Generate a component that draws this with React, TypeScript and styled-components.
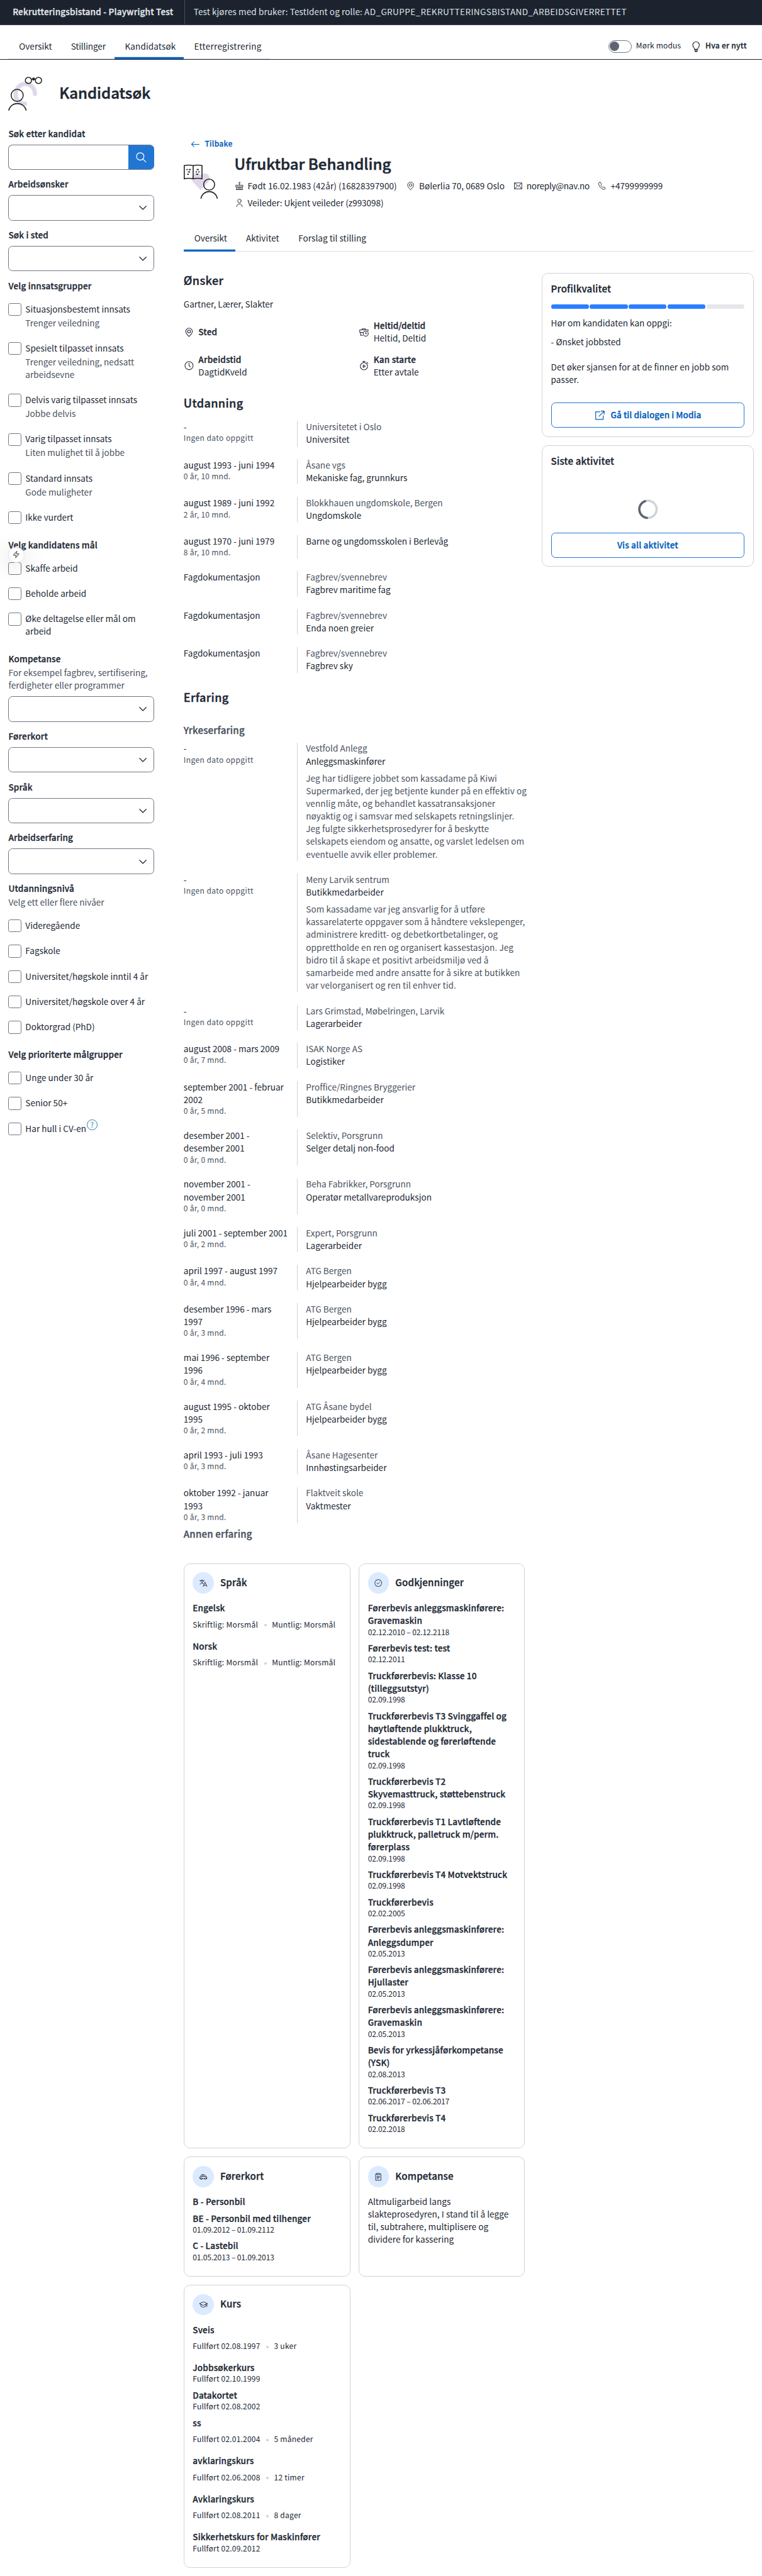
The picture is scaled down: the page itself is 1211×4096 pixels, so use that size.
import React from 'react';
import styled, { createGlobalStyle, css } from 'styled-components';

const ink = '#202733';
const subtle = '#49515e';
const line = '#cfd3d8';
const fieldBorder = '#6f7785';
const accent = '#2176d4';
const accentText = '#005cb8';

const GlobalStyle = createGlobalStyle`
  *, *::before, *::after { box-sizing: border-box; }
  html, body { margin: 0; background: #fff; overflow-x: hidden; }
  body { font-family: "Noto Sans CJK SC", "Noto Sans", sans-serif; color: ${ink}; }
  h1, h2, h3, p, ul { margin: 0; padding: 0; font-weight: 400; }
`;

type Size = 'xs' | 's' | 'm' | 'l' | 'xl';
/* font size, line height, tracking of regular text, tracking of headings */
const sizes: Record<Size, [number, number, number, number]> = {
  xs: [14.3, 20, 0.3, 0.35],
  s: [16.1, 24, 0.04, 0.2],
  m: [17.9, 28, 0, 0.22],
  l: [21.5, 32, 0, 0.45],
  xl: [28.6, 40, 0, 0],
};

const type = css<{ $size?: Size; $bold?: boolean; $color?: string; $track?: number }>`
  font-size: ${p => sizes[p.$size ?? 's'][0]}px;
  line-height: ${p => sizes[p.$size ?? 's'][1]}px;
  font-weight: ${p => (p.$bold ? 500 : 400)};
  ${p => p.$bold && '-webkit-text-stroke: 0.022em currentColor;'}
  color: ${p => p.$color ?? ink};
  letter-spacing: ${p => p.$track ?? sizes[p.$size ?? 's'][p.$bold ? 3 : 2]}px;
  white-space: pre;
`;

const Text = styled.p<{ $size?: Size; $bold?: boolean; $color?: string; $track?: number }>`
  ${type}
  margin-top: -0.085em;
  margin-bottom: 0.085em;
`;
const Caps = styled.span`letter-spacing: 0.47px;`;

const Page = styled.div`
  zoom: 0.841;
  width: 1439.9px;
  height: 4869px;
  position: relative;
  display: flex;
  flex-direction: column;
`;

const TopBar = styled.header`
  height: 48px;
  flex: none;
  display: flex;
  align-items: center;
  background: #1c232f;
  border-bottom: 1px solid #3a4250;
`;
const TopTitle = styled.div`
  width: 350px;
  height: 47px;
  padding-left: 24px;
  display: flex;
  align-items: center;
  border-right: 1px solid #454d5a;
`;
const TopInfo = styled.div`padding-left: 16px;`;

const NavBar = styled.nav`
  height: 65px;
  flex: none;
  display: flex;
  align-items: stretch;
  justify-content: space-between;
  padding: 0 28px 0 16px;
  border-bottom: 1px solid #1c232f;
`;
const TabList = styled.div<{ $full?: boolean }>`
  display: flex;
  align-items: stretch;
  box-shadow: inset 0 -1px 0 ${line};
  ${p => p.$full && 'height: 48px;'}
`;
const Tab = styled.div<{ $w: number; $active?: boolean }>`
  width: ${p => p.$w}px;
  padding: 0 0 1px 20px;
  display: flex;
  align-items: center;
  box-shadow: ${p => (p.$active ? 'inset 0 -4px 0 #0063c1' : 'none')};
`;
const NavTab = styled(Tab)`padding-top: 16px; padding-bottom: 0;`;
const NavTools = styled.div`
  display: flex;
  align-items: center;
  padding-top: 16px;
`;
const Switch = styled.div`
  width: 44px;
  height: 24px;
  margin-right: 8px;
  padding: 1px;
  border: 2px solid ${fieldBorder};
  border-radius: 12px;
  &::before {
    content: '';
    display: block;
    width: 18px;
    height: 18px;
    border-radius: 50%;
    background: #5d6573;
  }
`;
const NewsButton = styled.div`
  display: flex;
  align-items: center;
  width: 107px;
  margin-left: 18px;
  gap: 6px;
`;

const PageHead = styled.div`
  height: 128px;
  flex: none;
  display: flex;
  align-items: center;
  gap: 32px;
  padding: 0 16px;
`;
const Columns = styled.div`
  display: flex;
  gap: 56px;
  padding: 0 15.9px 0 16px;
`;

const Sidebar = styled.aside`
  width: 275px;
  flex: none;
  display: flex;
  flex-direction: column;
  gap: 16px;
`;
const Field = styled.div`display: flex; flex-direction: column;`;
const Control = styled.div`
  height: 48px;
  margin-top: 8px;
  border: 1px solid ${fieldBorder};
  border-radius: 8px;
  display: flex;
  align-items: center;
  justify-content: flex-end;
  padding-right: 8px;
  overflow: hidden;
`;
const SearchControl = styled(Control)`padding-right: 0; border-right: 0;`;
const SearchButton = styled.div`
  width: 48px;
  height: 48px;
  flex: none;
  background: ${accent};
  display: flex;
  align-items: center;
  justify-content: center;
`;
const Hint = styled(Text)`padding-top: 2px;`;
const Checks = styled.div`padding-top: 8px;`;
const Check = styled.div`
  display: flex;
  gap: 8px;
  padding: 12px 0;
`;
const Box = styled.span`
  width: 24px;
  height: 24px;
  flex: none;
  border: 2px solid ${fieldBorder};
  border-radius: 4px;
  background: #fff;
`;
const HelpMark = styled.span`
  margin: -6px 0 0 -7px;
  width: 20px;
  height: 20px;
  border: 1px solid #2a7aa8;
  border-radius: 50%;
  color: #2a7aa8;
  font-size: 13px;
  line-height: 17px;
  text-align: center;
`;
const BoltButton = styled.div`
  position: absolute;
  left: 16px;
  top: 1034px;
  width: 30px;
  height: 30px;
  border-radius: 50%;
  background: #fff;
  border: 1px solid #e4e4e6;
  box-shadow: 0 4px 40px rgba(0, 0, 0, 0.18);
  display: flex;
  align-items: center;
  justify-content: center;
`;

const Main = styled.main`
  flex: 1;
  display: flex;
  flex-direction: column;
  padding-top: 20px;
`;
const Back = styled.div`
  display: flex;
  align-items: center;
  gap: 8px;
  height: 24px;
  padding-left: 12px;
`;
const Profile = styled.div`
  display: flex;
  align-items: flex-start;
  gap: 32px;
  padding-top: 7px;
  height: 143px;
`;
const ProfileArt = styled.div`padding-top: 20px;`;
const Facts = styled.div`
  display: flex;
  height: 32px;
  align-items: center;
`;
const Fact = styled.div<{ $w?: number }>`
  display: flex;
  align-items: center;
  gap: 7px;
  width: ${p => (p.$w ? `${p.$w}px` : 'auto')};
`;
const Body = styled.div`
  display: flex;
  gap: 32px;
  padding-top: 40px;
`;
const Details = styled.div`width: 645px; flex: none;`;
const Aside = styled.div`
  flex: 1;
  display: flex;
  flex-direction: column;
  gap: 16px;
`;

const WishGrid = styled.div`
  display: grid;
  grid-template-columns: 331px 1fr;
  row-gap: 16px;
  margin: 16px 0 32px;
`;
const Wish = styled.div`
  display: flex;
  align-items: center;
  gap: 8px;
  height: 48px;
`;
const Timeline = styled.div`display: flex; flex-direction: column; gap: 24px;`;
const Entry = styled.div`
  display: grid;
  grid-template-columns: 214px 1fr;
`;
const EntryBody = styled.div`
  border-left: 1px solid ${line};
  padding-left: 16px;
`;
const Story = styled(Text)`padding-top: 8px;`;
const Section = styled.div<{ $top?: number; $bottom?: number }>`
  display: flow-root;
  padding-top: ${p => p.$top ?? 0}px;
  padding-bottom: ${p => p.$bottom ?? 0}px;
`;

const Cards = styled.div`
  display: grid;
  grid-template-columns: 315px 314px;
  gap: 16px;
  padding-top: 40px;
`;
const Card = styled.section`
  border: 1px solid ${line};
  border-radius: 12px;
  padding: 16px 16px 24px;
`;
const CardHead = styled.div`
  display: flex;
  align-items: center;
  gap: 12px;
  margin-bottom: 16px;
`;
const Badge = styled.span`
  width: 40px;
  height: 40px;
  border-radius: 50%;
  background: #dbeafe;
  display: flex;
  align-items: center;
  justify-content: center;
`;
const Items = styled.div`display: flex; flex-direction: column; gap: 8px;`;
const DotRow = styled.div`
  display: flex;
  align-items: center;
  padding: 10px 0;
`;
const Dot = styled.span`
  width: 5px;
  height: 5px;
  margin: 0 10px 0 11px;
  border-radius: 50%;
  background: ${line};
`;

const Panel = styled.section<{ $h: number }>`
  height: ${p => p.$h}px;
  border: 1px solid ${line};
  border-radius: 12px;
  padding: 16px;
  display: flex;
  flex-direction: column;
`;
const Meter = styled.div`
  display: grid;
  grid-template-columns: repeat(5, 1fr);
  gap: 2px;
  margin: 15px 0 15px;
`;
const Segment = styled.span<{ $on: boolean }>`
  height: 8px;
  border-radius: 4px;
  background: ${p => (p.$on ? '#2b7fff' : '#e5e7eb')};
`;
const PanelText = styled(Text)<{ $gap: number }>`padding-bottom: ${p => p.$gap}px;`;
const Outline = styled.div`
  height: 48px;
  margin-top: auto;
  border: 2px solid ${accent};
  border-radius: 8px;
  display: flex;
  align-items: center;
  justify-content: center;
  gap: 9px;
`;
const SpinnerWrap = styled.div`
  flex: 1;
  display: flex;
  justify-content: center;
  padding-top: 56px;
`;

const iconPaths: Record<string, React.ReactNode> = {
  chevron: <path d="M5.8 9.2 12 15.400l6.200-6.200" />,
  search: <><circle cx="10.500" cy="10.300" r="7" /><path d="m15.500 15.300 5.700 5.700" /></>,
  back: <><path d="M3.500 12h17" /><path d="M9 6.500 3.500 12 9 17.500" /></>,
  bulb: <><path d="M8.800 17.200c0-3-3.600-4.400-3.600-8.600A6.700 6.700 0 0 1 12 2a6.700 6.700 0 0 1 6.800 6.600c0 4.200-3.600 5.600-3.600 8.600z" /><path d="M9.500 17.500h5v3a2.500 2 0 0 1-5 0z" fill="currentColor" fillOpacity="0.5" /></>,
  cake: <><circle cx="12" cy="4" r="1.600" /><path d="M12 6v4" /><path d="M3.500 10.200h17v4.300h-17zM5 14.500V21h14v-6.500M8.500 14.500v2.800q1.700 2 3.500 0v-2.800M12 17.300q1.700 2 3.500 0v-2.800M3.500 21h17" /></>,
  pin: <><path d="M12 21.500c-4.500-4.200-7.500-7.500-7.500-11.500a7.500 7.500 0 0 1 15 0c0 4-3 7.300-7.500 11.500z" /><circle cx="12" cy="10" r="3.300" /></>,
  mail: <><path d="M3 4.500h18v15H3z" /><path d="m3.500 5 8.500 8 8.500-8M3.500 19l6.500-7.500M20.500 19 14 11.500" /></>,
  phone: <path d="M6.800 2.800 3.700 5c-.6 6.500 6.800 15.200 13.600 16.200l3.400-2.600c.4-.4.300-.9 0-1.300l-3.200-2.600c-.5-.3-1-.2-1.300.1l-1.500 1.500c-2.200-1-4.600-4-5.300-6.300l1.300-1.300c.3-.4.400-.8.100-1.300L8.200 3.100c-.3-.5-.9-.6-1.400-.3z" />,
  person: <><ellipse cx="12" cy="7.300" rx="4.300" ry="4.800" /><path d="M5 21.500c.5-4.500 3.300-6.700 7-6.700s6.500 2.200 7 6.700" /></>,
  hours: <><path d="M8 6.500V4h7v2.500M9 19H4.500v-7M2.500 12V6.500h19v2.500M2.500 12h7" /><circle cx="16" cy="15" r="5.800" /><path d="M16 12v3.300h2.300" /></>,
  clock: <><circle cx="12" cy="12" r="9.200" /><path d="M12 6.500V12l2.800 2.800" /></>,
  timer: <><circle cx="12" cy="13.300" r="8.200" /><path d="M9.500 2.300h5M12 2.300V5M18.500 4.500l2.500 2.500M10.300 10.500v5.600l4.700-2.800z" /></>,
  external: <><path d="M12 5H3.500v15.500H19V13" /><path d="M14.500 3.500h6.500V10M21 3.500 10.500 14" /></>,
  language: <><path d="M2.500 5.500h12M8.500 3v2.500M5 5.500c1 4 4 7 7.500 8.500M12.500 5.500c-1 4.500-4.500 8-9.500 9.500" /><path d="m11.500 21.500 5-12 5 12M13 18h7" /></>,
  seal: <><path d="M12 2.200l2.700 1.700 3.200.1.900 3 2.500 2-1 3 1 3-2.500 2-.9 3-3.200.1L12 21.800l-2.700-1.700-3.200-.1-.9-3-2.500-2 1-3-1-3 2.500-2 .9-3 3.200-.1z" /><path d="m8.500 12 2.500 2.700 4.500-5" /></>,
  car: <><path d="M4 17H2.700v-4.500L5 11l2.500-4.500h7.300L18.500 11l2.800 1.500V17H20M9 17h6M5 11h13.500M11 6.500V11" /><circle cx="6.500" cy="17" r="2.300" /><circle cx="17.500" cy="17" r="2.300" /></>,
  clipboard: <><path d="M8 4.500H5v17h14v-17h-3M8.500 3h7v3.500h-7zM8.500 11h7M8.500 14h7M8.500 17h4" /></>,
  grad: <><path d="M12 5.500 1.500 10 12 14.500 22.500 10zM5.500 12v5c3.500 3 9.500 3 13 0v-5M21.500 10.500V18" /></>,
  bolt: <path d="M14 2.500 4 14h7.500L10 21.500 20 10h-7.500z" />,
};

const Glyph = styled.svg`display: block; flex: none; overflow: visible;`;
function Icon({ name, size = 18, color = ink, stroke = 1.5 }: { name: string; size?: number; color?: string; stroke?: number }) {
  return (
    <Glyph width={size} height={size} viewBox="0 0 24 24" fill="none" stroke="currentColor" color={color}
      strokeWidth={stroke} strokeLinejoin="round" strokeLinecap="round">
      {iconPaths[name]}
    </Glyph>
  );
}

function SearchArt() {
  return (
    <Glyph width={64} height={64} viewBox="0 0 64 64" fill="none" stroke="#232323" strokeWidth="1.8">
      <path d="M50.600 32.500C50.600 22 43 13.500 32.500 13.500S14 23 14 34c0 10 8 17 18 17" stroke="#e0d8e9" strokeWidth="8" strokeLinecap="round" />
      <circle cx="38.300" cy="7" r="5.900" />
      <circle cx="57.300" cy="7" r="5.900" />
      <path d="M44 5.200q4-2 8 0" />
      <circle cx="48" cy="4.300" r="1.800" fill="#232323" />
      <circle cx="17" cy="35.200" r="11.400" />
      <path d="M.8 64C3 55.500 9.500 50.700 17.500 50.700S32 55.500 34.200 64" />
    </Glyph>
  );
}

function CandidateArt() {
  return (
    <Glyph width={64} height={64} viewBox="0 0 64 64" fill="none" stroke="#232323" strokeWidth="1.900">
      <path d="M32 48 17.300 32.300a9.700 9.700 0 0 1 14.700-12.900 9.700 9.700 0 0 1 14.700 12.900z" fill="#e0d8e9" stroke="none" />
      <path d="M1 1.500q8.500-1.800 16.800 0 8.500-1.800 16.700 0V26.500q-8-2-16.700 0-8.500-2-16.800 0zM17.800 1.500V26.500" />
      <path d="M5 9h2.500m2 0h4M8 13.500h4M6.500 18h3M24.500 9h4M22.500 13.500h2.500m2.500 0h2.500M23.500 18h4" strokeWidth="2.200" />
      <circle cx="48" cy="37.500" r="10.400" />
      <path d="M32.500 64c1.500-8.500 8-13.300 15.500-13.300S62 55.500 63.500 64" />
    </Glyph>
  );
}

const Sm: React.FC<React.ComponentProps<typeof Text>> = p => <Text $size="xs" {...p} />;

function Select({ label, hint }: { label: string; hint?: string }) {
  return (
    <Field>
      <Text $bold>{label}</Text>
      {hint && <Hint $color={subtle}>{hint}</Hint>}
      <Control><Icon name="chevron" size={24} /></Control>
    </Field>
  );
}

function CheckGroup({ label, hint, items }: { label: string; hint?: string; items: [string, string?][] }) {
  return (
    <Field>
      <Text $bold>{label}</Text>
      {hint && <Hint $color={subtle}>{hint}</Hint>}
      <Checks>
        {items.map(([title, note]) => (
          <Check key={title}>
            <Box />
            <div>
              <Text>{title}</Text>
              {note && <Hint $color={subtle}>{note}</Hint>}
            </div>
            {title === 'Har hull i CV-en' && <HelpMark>?</HelpMark>}
          </Check>
        ))}
      </Checks>
    </Field>
  );
}

type Row = { when: string; span?: string; place?: string; title: string; story?: string };
const none = 'Ingen dato oppgitt';

const education: Row[] = [
  { when: '-', span: none, place: 'Universitetet i Oslo', title: 'Universitet' },
  { when: 'august 1993 - juni 1994', span: '0 år, 10 mnd.', place: 'Åsane vgs', title: 'Mekaniske fag, grunnkurs' },
  { when: 'august 1989 - juni 1992', span: '2 år, 10 mnd.', place: 'Blokkhauen ungdomskole, Bergen', title: 'Ungdomskole' },
  { when: 'august 1970 - juni 1979', span: '8 år, 10 mnd.', title: 'Barne og ungdomsskolen i Berlevåg' },
  { when: 'Fagdokumentasjon', place: 'Fagbrev/svennebrev', title: 'Fagbrev maritime fag' },
  { when: 'Fagdokumentasjon', place: 'Fagbrev/svennebrev', title: 'Enda noen greier' },
  { when: 'Fagdokumentasjon', place: 'Fagbrev/svennebrev', title: 'Fagbrev sky' },
];

const work: Row[] = [
  {
    when: '-', span: none, place: 'Vestfold Anlegg', title: 'Anleggsmaskinfører',
    story: 'Jeg har tidligere jobbet som kassadame på Kiwi\nSupermarked, der jeg betjente kunder på en effektiv og\nvennlig måte, og behandlet kassatransaksjoner\nnøyaktig og i samsvar med selskapets retningslinjer.\nJeg fulgte sikkerhetsprosedyrer for å beskytte\nselskapets eiendom og ansatte, og varslet ledelsen om\neventuelle avvik eller problemer.',
  },
  {
    when: '-', span: none, place: 'Meny Larvik sentrum', title: 'Butikkmedarbeider',
    story: 'Som kassadame var jeg ansvarlig for å utføre\nkassarelaterte oppgaver som å håndtere vekslepenger,\nadministrere kreditt- og debetkortbetalinger, og\nopprettholde en ren og organisert kassestasjon. Jeg\nbidro til å skape et positivt arbeidsmiljø ved å\nsamarbeide med andre ansatte for å sikre at butikken\nvar velorganisert og ren til enhver tid.',
  },
  { when: '-', span: none, place: 'Lars Grimstad, Møbelringen, Larvik', title: 'Lagerarbeider' },
  { when: 'august 2008 - mars 2009', span: '0 år, 7 mnd.', place: 'ISAK Norge AS', title: 'Logistiker' },
  { when: 'september 2001 - februar\n2002', span: '0 år, 5 mnd.', place: 'Proffice/Ringnes Bryggerier', title: 'Butikkmedarbeider' },
  { when: 'desember 2001 -\ndesember 2001', span: '0 år, 0 mnd.', place: 'Selektiv, Porsgrunn', title: 'Selger detalj non-food' },
  { when: 'november 2001 -\nnovember 2001', span: '0 år, 0 mnd.', place: 'Beha Fabrikker, Porsgrunn', title: 'Operatør metallvareproduksjon' },
  { when: 'juli 2001 - september 2001', span: '0 år, 2 mnd.', place: 'Expert, Porsgrunn', title: 'Lagerarbeider' },
  { when: 'april 1997 - august 1997', span: '0 år, 4 mnd.', place: 'ATG Bergen', title: 'Hjelpearbeider bygg' },
  { when: 'desember 1996 - mars\n1997', span: '0 år, 3 mnd.', place: 'ATG Bergen', title: 'Hjelpearbeider bygg' },
  { when: 'mai 1996 - september\n1996', span: '0 år, 4 mnd.', place: 'ATG Bergen', title: 'Hjelpearbeider bygg' },
  { when: 'august 1995 - oktober\n1995', span: '0 år, 2 mnd.', place: 'ATG Åsane bydel', title: 'Hjelpearbeider bygg' },
  { when: 'april 1993 - juli 1993', span: '0 år, 3 mnd.', place: 'Åsane Hagesenter', title: 'Innhøstingsarbeider' },
  { when: 'oktober 1992 - januar\n1993', span: '0 år, 3 mnd.', place: 'Flaktveit skole', title: 'Vaktmester' },
];

function Rows({ rows }: { rows: Row[] }) {
  return (
    <Timeline>
      {rows.map((r, i) => (
        <Entry key={i}>
          <div>
            <Text>{r.when}</Text>
            {r.span && <Sm $color={subtle} $track={r.span === none ? 0.5 : 0.3}>{r.span}</Sm>}
          </div>
          <EntryBody>
            {r.place && <Text $color={subtle}>{r.place}</Text>}
            <Text>{r.title}</Text>
            {r.story && <Story $color={subtle} $track={0.12}>{r.story}</Story>}
          </EntryBody>
        </Entry>
      ))}
    </Timeline>
  );
}

type Item = { title: string; note?: string; extra?: string };
const approvals: Item[] = [
  { title: 'Førerbevis anleggsmaskinførere:\nGravemaskin', note: '02.12.2010 – 02.12.2118' },
  { title: 'Førerbevis test: test', note: '02.12.2011' },
  { title: 'Truckførerbevis: Klasse 10\n(tilleggsutstyr)', note: '02.09.1998' },
  { title: 'Truckførerbevis T3 Svinggaffel og\nhøytløftende plukktruck,\nsidestablende og førerløftende\ntruck', note: '02.09.1998' },
  { title: 'Truckførerbevis T2\nSkyvemasttruck, støttebenstruck', note: '02.09.1998' },
  { title: 'Truckførerbevis T1 Lavtløftende\nplukktruck, palletruck m/perm.\nførerplass', note: '02.09.1998' },
  { title: 'Truckførerbevis T4 Motvektstruck', note: '02.09.1998' },
  { title: 'Truckførerbevis', note: '02.02.2005' },
  { title: 'Førerbevis anleggsmaskinførere:\nAnleggsdumper', note: '02.05.2013' },
  { title: 'Førerbevis anleggsmaskinførere:\nHjullaster', note: '02.05.2013' },
  { title: 'Førerbevis anleggsmaskinførere:\nGravemaskin', note: '02.05.2013' },
  { title: 'Bevis for yrkessjåførkompetanse\n(YSK)', note: '02.08.2013' },
  { title: 'Truckførerbevis T3', note: '02.06.2017 – 02.06.2017' },
  { title: 'Truckførerbevis T4', note: '02.02.2018' },
];
const languages: Item[] = [
  { title: 'Engelsk', note: 'Skriftlig: Morsmål', extra: 'Muntlig: Morsmål' },
  { title: 'Norsk', note: 'Skriftlig: Morsmål', extra: 'Muntlig: Morsmål' },
];
const licences: Item[] = [
  { title: 'B - Personbil' },
  { title: 'BE - Personbil med tilhenger', note: '01.09.2012 – 01.09.2112' },
  { title: 'C - Lastebil', note: '01.05.2013 – 01.09.2013' },
];
const courses: Item[] = [
  { title: 'Sveis', note: 'Fullført 02.08.1997', extra: '3 uker' },
  { title: 'Jobbsøkerkurs', note: 'Fullført 02.10.1999' },
  { title: 'Datakortet', note: 'Fullført 02.08.2002' },
  { title: 'ss', note: 'Fullført 02.01.2004', extra: '5 måneder' },
  { title: 'avklaringskurs', note: 'Fullført 02.06.2008', extra: '12 timer' },
  { title: 'Avklaringskurs', note: 'Fullført 02.08.2011', extra: '8 dager' },
  { title: 'Sikkerhetskurs for Maskinfører', note: 'Fullført 02.09.2012' },
];

const noteTrack = (note: string) => (/^\d/.test(note) ? -0.12 : note.startsWith('Full') ? 0.24 : 0.38);

function CvCard({ icon, title, items, text }: { icon: string; title: string; items?: Item[]; text?: string }) {
  return (
    <Card>
      <CardHead>
        <Badge><Icon name={icon} size={17} /></Badge>
        <Text $size="m" $bold>{title}</Text>
      </CardHead>
      {text && <Text $track={0.08}>{text}</Text>}
      <Items>
        {items?.map((it, i) => (
          <div key={i}>
            <Text $bold>{it.title}</Text>
            {it.note && it.extra && (
              <DotRow><Sm $track={noteTrack(it.note)}>{it.note}</Sm><Dot /><Sm>{it.extra}</Sm></DotRow>
            )}
            {it.note && !it.extra && <Sm $track={noteTrack(it.note)}>{it.note}</Sm>}
          </div>
        ))}
      </Items>
    </Card>
  );
}

export default function App() {
  return (
    <>
      <GlobalStyle />
      <Page>
        <TopBar>
          <TopTitle><Text $bold $color="#e6e8ec" $track={0.25}>Rekrutteringsbistand - Playwright Test</Text></TopTitle>
          <TopInfo><Text $color="#dfe2e7" $track={0.13}>Test kjøres med bruker: TestIdent og rolle: <Caps>AD_GRUPPE_REKRUTTERINGSBISTAND_ARBEIDSGIVERRETTET</Caps></Text></TopInfo>
        </TopBar>
        <NavBar>
          <TabList>
            <NavTab $w={98}><Text>Oversikt</Text></NavTab>
            <NavTab $w={102}><Text $track={-0.15}>Stillinger</Text></NavTab>
            <NavTab $w={131} $active><Text $track={0.15}>Kandidatsøk</Text></NavTab>
            <NavTab $w={163}><Text $track={0.33}>Etterregistrering</Text></NavTab>
          </TabList>
          <NavTools>
            <Switch />
            <Sm $track={0.2}>Mørk modus</Sm>
            <NewsButton><Icon name="bulb" size={22} /><Sm $bold>Hva er nytt</Sm></NewsButton>
          </NavTools>
        </NavBar>

        <PageHead>
          <SearchArt />
          <Text $size="xl" $bold>Kandidatsøk</Text>
        </PageHead>

        <Columns>
          <Sidebar>
            <Field>
              <Text $bold>Søk etter kandidat</Text>
              <SearchControl><SearchButton><Icon name="search" size={24} color="#fff" /></SearchButton></SearchControl>
            </Field>
            <Select label="Arbeidsønsker" />
            <Select label="Søk i sted" />
            <CheckGroup label="Velg innsatsgrupper" items={[
              ['Situasjonsbestemt innsats', 'Trenger veiledning'],
              ['Spesielt tilpasset innsats', 'Trenger veiledning, nedsatt\narbeidsevne'],
              ['Delvis varig tilpasset innsats', 'Jobbe delvis'],
              ['Varig tilpasset innsats', 'Liten mulighet til å jobbe'],
              ['Standard innsats', 'Gode muligheter'],
              ['Ikke vurdert'],
            ]} />
            <CheckGroup label="Velg kandidatens mål" items={[
              ['Skaffe arbeid'],
              ['Beholde arbeid'],
              ['Øke deltagelse eller mål om\narbeid'],
            ]} />
            <Select label="Kompetanse" hint={'For eksempel fagbrev, sertifisering,\nferdigheter eller programmer'} />
            <Select label="Førerkort" />
            <Select label="Språk" />
            <Select label="Arbeidserfaring" />
            <CheckGroup label="Utdanningsnivå" hint="Velg ett eller flere nivåer" items={[
              ['Videregående'],
              ['Fagskole'],
              ['Universitet/høgskole inntil 4 år'],
              ['Universitet/høgskole over 4 år'],
              ['Doktorgrad (PhD)'],
            ]} />
            <CheckGroup label="Velg prioriterte målgrupper" items={[
              ['Unge under 30 år'],
              ['Senior 50+'],
              ['Har hull i CV-en'],
            ]} />
          </Sidebar>

          <Main>
            <Back><Icon name="back" size={20} color={accentText} /><Sm $bold $color={accentText}>Tilbake</Sm></Back>
            <Profile>
              <ProfileArt><CandidateArt /></ProfileArt>
              <div>
                <Text $size="xl" $bold>Ufruktbar Behandling</Text>
                <Section $top={4}>
                  <Facts>
                    <Fact $w={324}><Icon name="cake" /><Text $track={0.09}>Født 16.02.1983 (42år) (16828397900)</Text></Fact>
                    <Fact $w={203}><Icon name="pin" /><Text>Bølerlia 70, 0689 Oslo</Text></Fact>
                    <Fact $w={159}><Icon name="mail" /><Text $track={-0.3}>noreply@nav.no</Text></Fact>
                    <Fact><Icon name="phone" /><Text>+4799999999</Text></Fact>
                  </Facts>
                  <Facts>
                    <Fact><Icon name="person" /><Text $track={-0.05}>Veileder: Ukjent veileder (z993098)</Text></Fact>
                  </Facts>
                </Section>
              </div>
            </Profile>
            <TabList $full>
              <Tab $w={98} $active><Text>Oversikt</Text></Tab>
              <Tab $w={99}><Text>Aktivitet</Text></Tab>
              <Tab $w={165}><Text>Forslag til stilling</Text></Tab>
            </TabList>

            <Body>
              <Details>
                <Text $size="l" $bold>Ønsker</Text>
                <Section $top={16}><Text>Gartner, Lærer, Slakter</Text></Section>
                <WishGrid>
                  <Wish><Icon name="pin" size={20} /><Text $bold>Sted</Text></Wish>
                  <Wish><Icon name="hours" size={20} /><div><Text $bold $track={0}>Heltid/deltid</Text><Text>Heltid, Deltid</Text></div></Wish>
                  <Wish><Icon name="clock" size={20} /><div><Text $bold>Arbeidstid</Text><Text>DagtidKveld</Text></div></Wish>
                  <Wish><Icon name="timer" size={20} /><div><Text $bold>Kan starte</Text><Text>Etter avtale</Text></div></Wish>
                </WishGrid>
                <Section $bottom={16}><Text $size="l" $bold>Utdanning</Text></Section>
                <Rows rows={education} />
                <Section $top={32} $bottom={32}><Text $size="l" $bold>Erfaring</Text></Section>
                <Section $bottom={8}><Text $size="m" $bold $color={subtle}>Yrkeserfaring</Text></Section>
                <Rows rows={work} />
                <Section $top={8}><Text $size="m" $bold $color={subtle}>Annen erfaring</Text></Section>
                <Cards>
                  <CvCard icon="language" title="Språk" items={languages} />
                  <CvCard icon="seal" title="Godkjenninger" items={approvals} />
                  <CvCard icon="car" title="Førerkort" items={licences} />
                  <CvCard icon="clipboard" title="Kompetanse" text={'Altmuligarbeid langs\nslakteprosedyren, I stand til å legge\ntil, subtrahere, multiplisere og\ndividere for kassering'} />
                  <CvCard icon="grad" title="Kurs" items={courses} />
                </Cards>
              </Details>

              <Aside>
                <Panel $h={310}>
                  <Text $size="m" $bold>Profilkvalitet</Text>
                  <Meter>{[1, 1, 1, 1, 0].map((on, i) => <Segment key={i} $on={!!on} />)}</Meter>
                  <PanelText $gap={12}>Hør om kandidaten kan oppgi:</PanelText>
                  <PanelText $gap={24}>- Ønsket jobbsted</PanelText>
                  <Text $track={0.07}>{'Det øker sjansen for at de finner en jobb som\npasser.'}</Text>
                  <Outline><Icon name="external" size={22} color={accentText} /><Text $bold $color={accentText} $track={0.06}>Gå til dialogen i Modia</Text></Outline>
                </Panel>
                <Panel $h={230}>
                  <Text $size="m" $bold>Siste aktivitet</Text>
                  <SpinnerWrap>
                    <Glyph width={40} height={40} viewBox="0 0 40 40" fill="none" strokeWidth="4.200">
                      <circle cx="20" cy="20" r="16.300" stroke={line} />
                      <path d="M14.500 4.600A16.300 16.300 0 0 0 18 36.200" stroke="#5d6573" strokeLinecap="round" />
                    </Glyph>
                  </SpinnerWrap>
                  <Outline><Text $bold $color={accentText}>Vis all aktivitet</Text></Outline>
                </Panel>
              </Aside>
            </Body>
          </Main>
        </Columns>
        <BoltButton><Icon name="bolt" size={16} color="#666" stroke={2} /></BoltButton>
      </Page>
    </>
  );
}
